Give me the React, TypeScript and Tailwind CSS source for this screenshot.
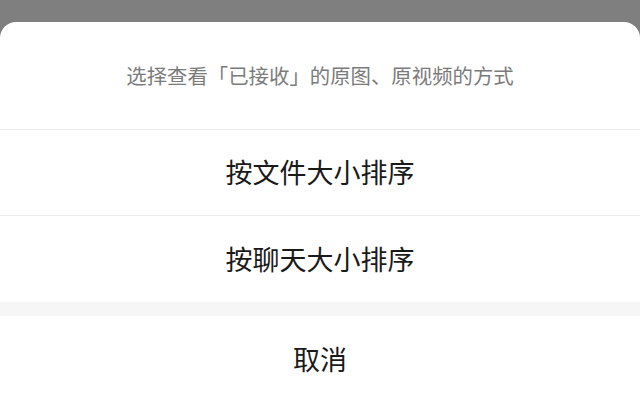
import React from "react";

const font = { fontFamily: '"Noto Sans CJK SC", "Noto Sans", sans-serif' };

export default function App() {
  return (
    <div
      className="w-[640px] h-[408px] overflow-hidden bg-[#7f7f7f] flex flex-col"
      style={font}
    >
      <div className="h-[22px] shrink-0" />
      <div className="flex-1 bg-white rounded-t-[16px] flex flex-col">
        <div className="h-[107px] shrink-0 flex items-center justify-center text-[20.4px] text-[#7b7b7b]">
          选择查看「已接收」的原图、原视频的方式
        </div>
        <div className="h-px bg-[#ececec] shrink-0" />
        <div className="h-[85px] shrink-0 flex items-center justify-center text-[27px] text-[#1a1a1a]">
          按文件大小排序
        </div>
        <div className="h-px bg-[#ececec] shrink-0" />
        <div className="h-[86px] shrink-0 flex items-center justify-center text-[27px] text-[#1a1a1a]">
          按聊天大小排序
        </div>
        <div className="h-[14px] bg-[#f6f6f6] shrink-0" />
        <div className="h-[86px] shrink-0 flex items-center justify-center text-[27px] text-[#1a1a1a]">
          取消
        </div>
        <div className="flex-1" />
      </div>
    </div>
  );
}
